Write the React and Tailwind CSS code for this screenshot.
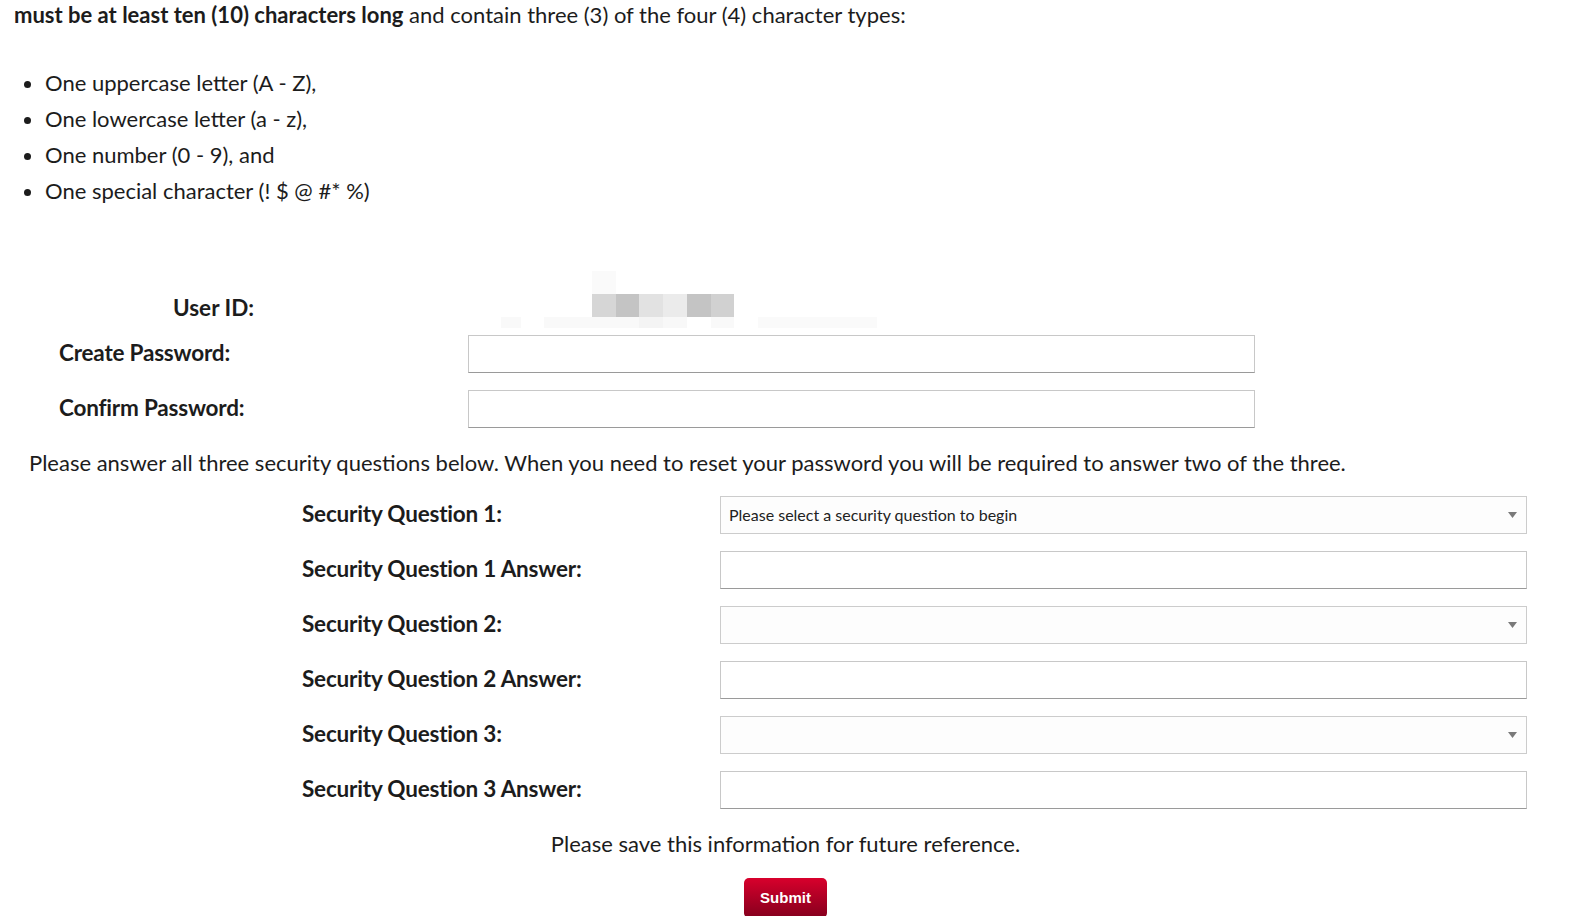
import React from "react";

const inputClass =
  "h-[38px] bg-white border border-[#c8c8c8] border-b-[#9a9a9a] outline-none px-2 text-[16px]";

const SelectBox = ({ placeholder }) => (
  <div className="relative h-[38px] w-[807px] bg-[#fdfdfd] border border-[#cccccc] flex items-center pl-[8px] text-[16px] text-[#222]">
    <span>{placeholder}</span>
    <svg
      className="absolute right-[9px] top-[15px]"
      width="9"
      height="6"
      viewBox="0 0 9 6"
    >
      <polygon points="0,0 9,0 4.5,6" fill="#7a7a7a" />
    </svg>
  </div>
);

const FormRow = ({ label, children, labelWidth, indent }) => (
  <div className="flex items-center h-[38px]" style={{ paddingLeft: indent }}>
    <label
      className="font-bold text-[22.5px] leading-[36px] tracking-[-0.2px] shrink-0 mb-[2px]"
      style={{ width: labelWidth }}
    >
      {label}
    </label>
    {children}
  </div>
);

// pixelated redaction over the user id value
const Redacted = () => (
  <svg width="376" height="57" viewBox="0 0 376 57" className="shrink-0">
    <rect x="91" y="0" width="24" height="23" fill="#fafafa" />
    <rect x="91" y="23" width="24" height="23" fill="#d6d6d6" />
    <rect x="115" y="23" width="23" height="23" fill="#c4c4c4" />
    <rect x="138" y="23" width="24" height="23" fill="#e2e2e2" />
    <rect x="162" y="23" width="24" height="23" fill="#ebebeb" />
    <rect x="186" y="23" width="24" height="23" fill="#c4c4c4" />
    <rect x="210" y="23" width="23" height="23" fill="#d1d1d1" />
    <rect x="0" y="46" width="20" height="11" fill="#f9f9f9" />
    <rect x="43" y="46" width="95" height="11" fill="#f9f9f9" />
    <rect x="138" y="46" width="24" height="11" fill="#f4f4f4" />
    <rect x="162" y="46" width="24" height="11" fill="#f8f8f8" />
    <rect x="210" y="46" width="23" height="11" fill="#f9f9f9" />
    <rect x="257" y="46" width="119" height="11" fill="#fafafa" />
  </svg>
);

const App = () => {
  const rules = [
    "One uppercase letter (A - Z),",
    "One lowercase letter (a - z),",
    "One number (0 - 9), and",
    "One special character (! $ @ #* %)",
  ];

  const security = [
    { label: "Security Question 1:", type: "select", placeholder: "Please select a security question to begin" },
    { label: "Security Question 1 Answer:", type: "input" },
    { label: "Security Question 2:", type: "select", placeholder: "" },
    { label: "Security Question 2 Answer:", type: "input" },
    { label: "Security Question 3:", type: "select", placeholder: "" },
    { label: "Security Question 3 Answer:", type: "input" },
  ];

  return (
    <div className="w-[1571px] h-[916px] overflow-hidden bg-white text-[#1c1c1c] font-['Lato','Noto_Sans',sans-serif]">
      <p className="pl-[14px] text-[22px] leading-[30px]">
        <strong className="font-bold">must be at least ten (10) characters long</strong>{" "}
        and contain three (3) of the four (4) character types:
      </p>

      <ul className="mt-[35px] list-disc pl-[45px] text-[22px] leading-[36px]">
        {rules.map((rule, idx) => (
          <li key={idx}>{rule}</li>
        ))}
      </ul>

      {/* account section */}
      <div className="mt-[62px] flex items-end h-[57px]">
        <div className="pl-[173px] w-[501px] shrink-0 mb-[2px]">
          <span className="font-bold text-[22.5px] leading-[36px]">User ID:</span>
        </div>
        <Redacted />
      </div>

      <div className="mt-[7px] flex flex-col gap-[17px]">
        <FormRow label="Create Password:" labelWidth="409px" indent="59px">
          <input type="password" className={`${inputClass} w-[787px]`} />
        </FormRow>
        <FormRow label="Confirm Password:" labelWidth="409px" indent="59px">
          <input type="password" className={`${inputClass} w-[787px]`} />
        </FormRow>
      </div>

      <p className="mt-[17px] pl-[29px] text-[22px] leading-[36px]">
        Please answer all three security questions below. When you need to reset your
        password you will be required to answer two of the three.
      </p>

      <div className="mt-[15px] flex flex-col gap-[17px]">
        {security.map((row, idx) => (
          <FormRow key={idx} label={row.label} labelWidth="418px" indent="302px">
            {row.type === "select" ? (
              <SelectBox placeholder={row.placeholder} />
            ) : (
              <input type="text" className={`${inputClass} w-[807px]`} />
            )}
          </FormRow>
        ))}
      </div>

      <p className="mt-[17px] text-center text-[22px] leading-[36px]">
        Please save this information for future reference.
      </p>

      <div className="mt-[16px] flex justify-center">
        <button className="h-[40px] w-[83px] rounded-[5px] bg-gradient-to-b from-[#d8002c] to-[#85001d] text-white font-bold text-[15px] font-['Liberation_Sans',Arial,sans-serif]">
          Submit
        </button>
      </div>
    </div>
  );
};

export default App;
